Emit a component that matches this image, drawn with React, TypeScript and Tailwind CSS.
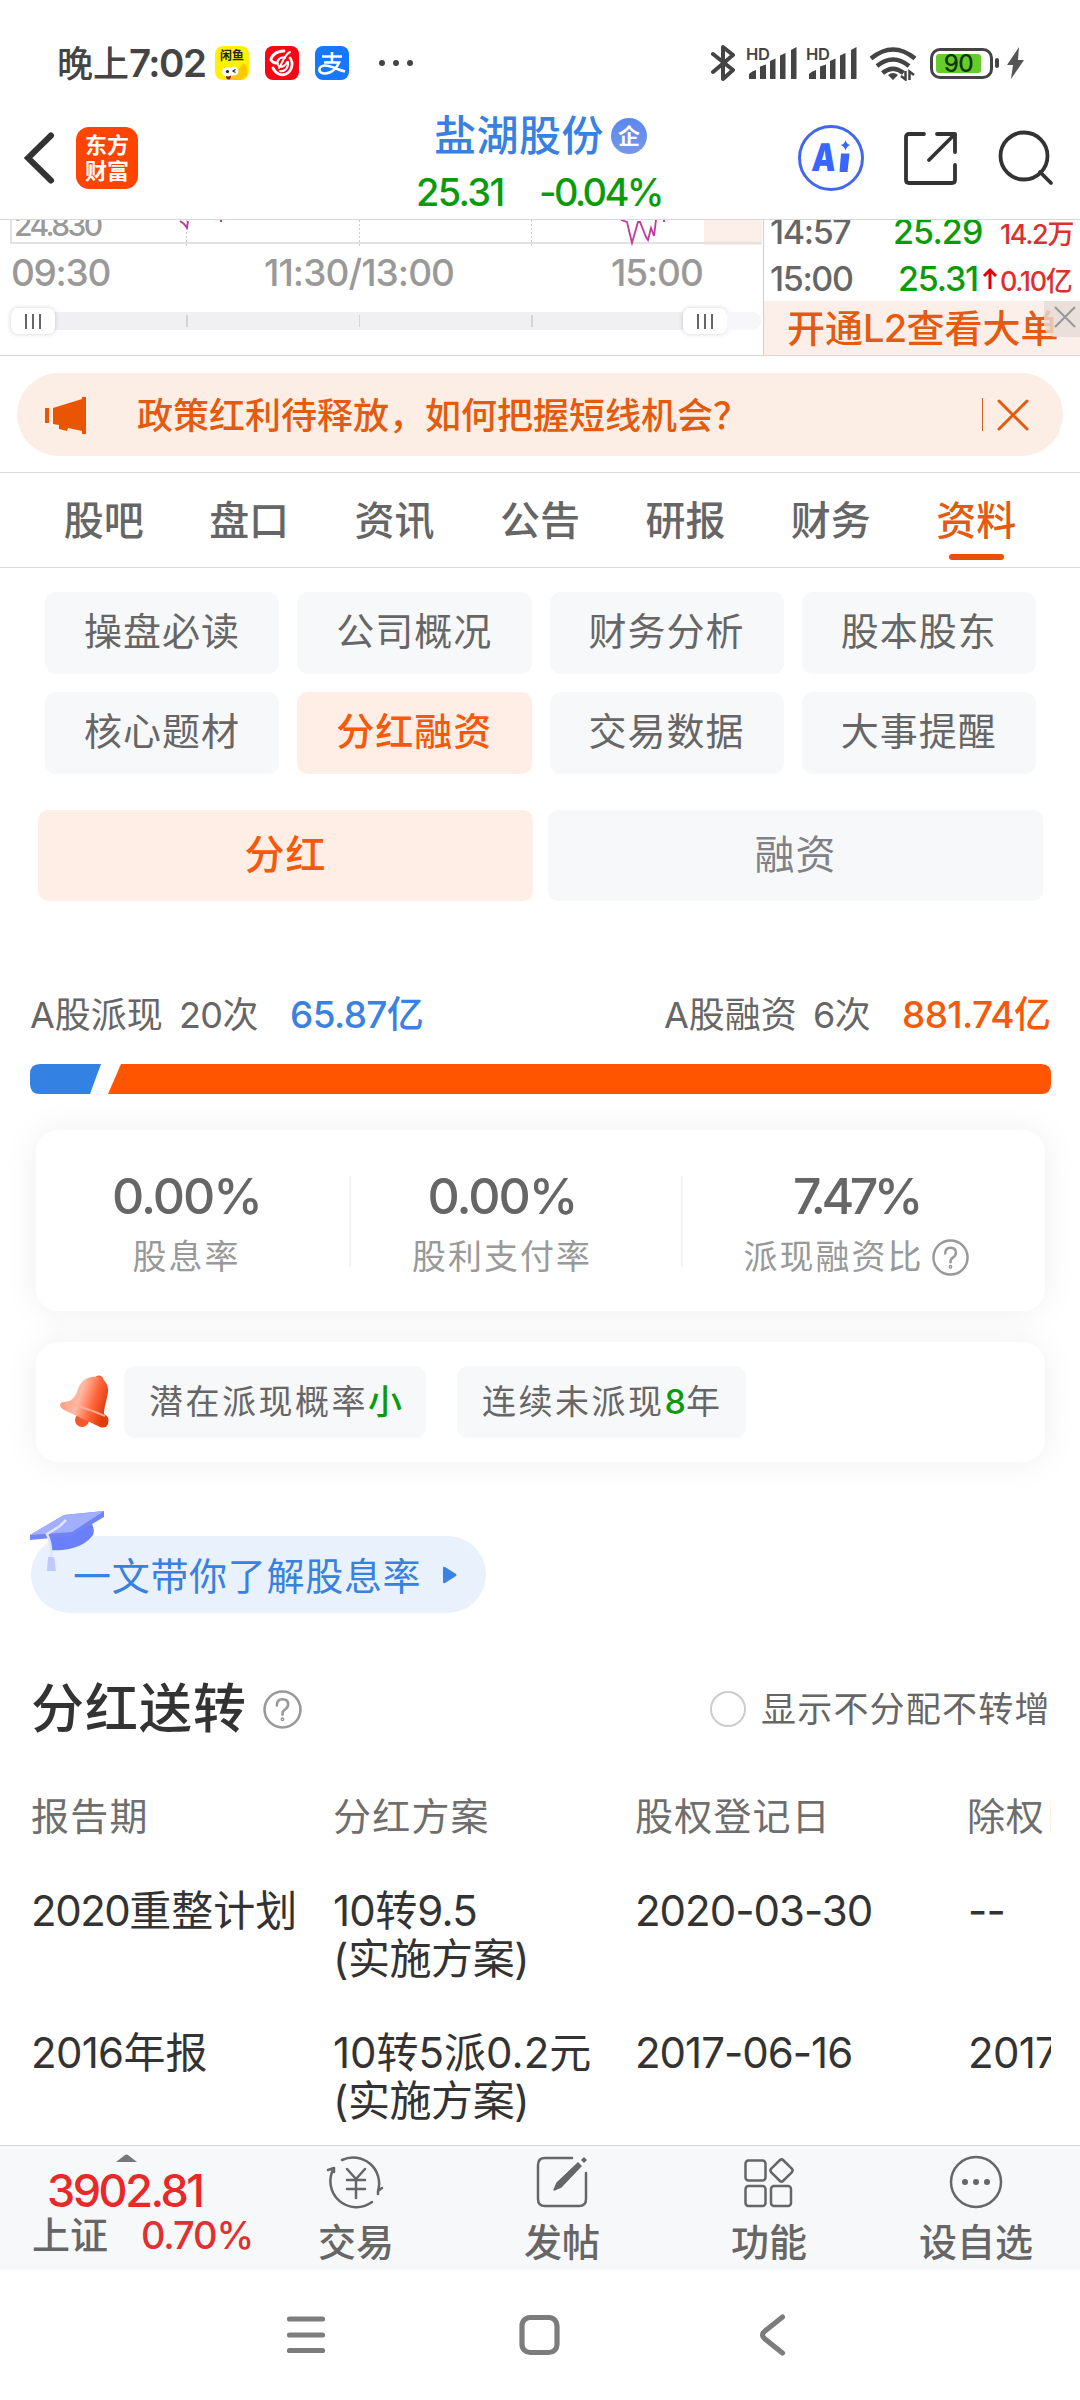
import type { ReactNode } from 'react';

const tabs = ['股吧', '盘口', '资讯', '公告', '研报', '财务', '资料'];

const subTabs = ['操盘必读', '公司概况', '财务分析', '股本股东', '核心题材', '分红融资', '交易数据', '大事提醒'];

interface DividendRow {
  period: ReactNode;
  plan: ReactNode;
  recordDate: string;
  exDate: string;
}

const Num = ({ children }: { children: ReactNode }) => <span className="tracking-[-0.017em]">{children}</span>;

const dividendRows: DividendRow[] = [
  {
    period: <><span className="tracking-[-0.035em]">2020</span>重整计划</>,
    plan: <><Num>10</Num>转<Num>9.5</Num></>,
    recordDate: '2020-03-30',
    exDate: '--',
  },
  {
    period: <><Num>2016</Num>年报</>,
    plan: <>10转5派0.2元</>,
    recordDate: '2017-06-16',
    exDate: '2017-06-19',
  },
];

const Signal = () => (
  <svg className="h-[34px] w-[50px] overflow-visible" viewBox="0 0 50 34" fill="#444">
    <text x="-1" y="13.500" fontSize="16.500" fontWeight="600" fontFamily="Inter, sans-serif" textLength="24">HD</text>
    <path d="M2 33v-5q3-3 7-4v9zM13 33V20.500l6-2V33zM23 33V15l5.500-2.500V33zM33 33V9.500L38.500 7v26zM44 33V4l5.500-3v32z" />
  </svg>
);

const StatusBar = () => (
  <div className="flex h-[110px] items-center pt-4 pl-[57px] text-[#444]">
    <div className="w-[158px] text-[36px] leading-none font-medium whitespace-nowrap">
      晚上<span className="text-[38.5px] font-semibold tracking-[-0.04em]">7:02</span>
    </div>
    <svg className="h-[34px] w-[34px]" viewBox="0 0 34 34">
      <rect width="34" height="34" rx="8" fill="#fff100" />
      <path d="M28 17c4 2 5 7 4 13l-6 4H12l10-8z" fill="#ffc800" />
      <circle cx="12" cy="26" r="5" fill="#fff" />
      <circle cx="19" cy="25" r="4.500" fill="#fff" />
      <circle cx="12.500" cy="25.500" r="1.600" fill="#222" />
      <path d="M20.500 23.500l-2.500 1.500 2.500 1.500" stroke="#222" strokeWidth="1.200" fill="none" />
      <path d="M11 30q3 1 5-.5 0 4-2.500 4T11 30z" fill="#8a1d10" />
      <text x="5" y="14" fontSize="12" fontWeight="700" fontFamily="'Noto Sans CJK SC', sans-serif" fill="#222">闲鱼</text>
    </svg>
    <svg className="ml-4 h-[34px] w-[34px]" viewBox="0 0 34 34" fill="none" stroke="#fff" strokeLinecap="round">
      <rect width="34" height="34" rx="8" fill="#fa0514" stroke="none" />
      <path d="M19 5C10 5 6 11 6 14c2 3 5 3 5 3M8 22c3 6 8 8 13 6 6-3 8-11 4-16" strokeWidth="2.800" />
      <path d="M25 6C19 9 17 18 14 22M20 12c-5-2-9 3-7 7 2 3 7 2 9-3M15 25c5 1 9-4 8-9" strokeWidth="2" />
    </svg>
    <svg className="ml-4 h-[34px] w-[34px]" viewBox="0 0 34 34" fill="none" stroke="#fff">
      <rect width="34" height="34" rx="8" fill="#1677ff" stroke="none" />
      <path d="M7 10.500h20M17 6v10M9 16.500h15c-2 5-7 11-14 11-8 0-7-8 0-8 6 0 12 4 20 6" strokeWidth="2.600" />
    </svg>
    <div className="ml-[30px] flex gap-[8px]">
      <span className="size-1.5 rounded-full bg-[#444]" />
      <span className="size-1.5 rounded-full bg-[#444]" />
      <span className="size-1.5 rounded-full bg-[#444]" />
    </div>
    <svg className="ml-[298px] h-[38px] w-[25px] shrink-0" viewBox="0 0 25 38" fill="none" stroke="#444" strokeWidth="4" strokeLinecap="round" strokeLinejoin="round">
      <path d="M2 10l20 16-10 9V3l10 8L2 28" />
    </svg>
    <div className="ml-[11px] flex gap-[10px]">
      <Signal />
      <Signal />
    </div>
    <svg className="ml-[12px] h-[36px] w-[48px]" viewBox="0 0 48 36" fill="none" stroke="#444" strokeWidth="4.500">
      <path d="M2 13.500Q24-4.500 46 13.500M8 21q16-13 32 0M13.500 28q10.500-8.500 21 0" />
      <path d="M24 35l-5-5q5-4 10 0z" fill="#444" stroke="none" />
      <path d="M36.500 26v8.500L32 31M40.500 35v-8.500l4.500 3.500" strokeWidth="2.500" />
    </svg>
    <div className="ml-[13px] flex h-[31px] w-[63px] rounded-[10px] border-[3px] border-[#444] p-[3px]">
      <div className="h-[19px] w-[45px] rounded-[3px] bg-[#66cc29] text-center text-[24px] leading-[19px] font-medium tracking-[-0.02em] text-[#143405]">90</div>
    </div>
    <div className="ml-[2px] h-[10px] w-1 rounded bg-[#444]" />
    <svg className="ml-[7px] h-[32px] w-[19px]" viewBox="0 0 19 32" fill="#555">
      <path d="M13 0L1 18h6L5 32l13-19h-6z" />
    </svg>
  </div>
);

const Header = () => (
  <div className="flex h-[110px] border-b border-[#d8d8d8] pl-[24px]">
    <svg className="mt-[21px] h-[54px] w-[32px]" viewBox="0 0 32 54" fill="none" stroke="#333" strokeWidth="6" strokeLinecap="round">
      <path d="M27 4.500L4 27l23 22.500" />
    </svg>
    <div className="mt-[17px] ml-[20px] flex h-[62px] w-[62px] flex-col items-center justify-center gap-[4px] rounded-[13px] bg-[#ff4400] text-[22px] leading-[22px] font-bold text-white">
      <span>东方</span>
      <span>财富</span>
    </div>
    <div className="w-[660px]">
      <div className="mt-[5px] flex items-center pl-[296px]">
        <span className="w-[177px] text-[42px] leading-[42px] font-medium tracking-[0.500px] whitespace-nowrap text-[#3881e0]">盐湖股份</span>
        <span className="flex size-9 items-center justify-center rounded-full bg-linear-to-b from-[#5c86ee] to-[#7599e6] text-[22px] leading-none font-bold text-white">企</span>
      </div>
      <div className="mt-[14px] flex pl-[278px] text-[38px] leading-[42px] font-medium text-[#0a9b0a]">
        <span className="w-[123px] tracking-[-0.045em]">25.31</span>
        <span className="tracking-[-0.07em]">-0.04%</span>
      </div>
    </div>
    <svg className="mt-[15px] h-[66px] w-[66px]" viewBox="0 0 66 66">
      <circle cx="33" cy="33" r="31.500" fill="none" stroke="#4168ec" strokeWidth="3" />
      <text x="17" y="46" fontSize="38" fontWeight="900" fontFamily="Inter, sans-serif" fill="#3866ff" textLength="24" lengthAdjust="spacingAndGlyphs" transform="skewX(-5)">A</text>
      <path d="M43 28.500h8.500l-2 18.500h-8zM47.500 15q1 4.500 5 5-4 1-5 5.500-1-4.500-5-5.500 4-.5 5-5z" fill="#3866ff" />
    </svg>
    <svg className="mt-[21px] ml-[39px] h-[54px] w-[54px]" viewBox="0 0 54 54" fill="none" stroke="#333" strokeWidth="3.800" strokeLinecap="round" strokeLinejoin="round">
      <path d="M21 3H6Q3 3 3 6v43q0 3 3 3h43q3 0 3-3V34M34 3h18v18M52 3L26 29" />
    </svg>
    <svg className="mt-[20px] ml-[41px] h-[56px] w-[56px]" viewBox="0 0 56 56" fill="none" stroke="#333" strokeWidth="3.800" strokeLinecap="round">
      <circle cx="26" cy="26" r="23.500" />
      <path d="M42 42l11 11" />
    </svg>
  </div>
);

const Handle = () => (
  <div className="flex h-[26px] w-[44px] items-center justify-center gap-[5px] rounded-[7px] bg-white shadow-[0_0_5px_rgba(0,0,0,0.18)]">
    <span className="h-[15px] w-[2px] bg-[#666]" />
    <span className="h-[15px] w-[2px] bg-[#666]" />
    <span className="h-[15px] w-[2px] bg-[#666]" />
  </div>
);

const ChartStrip = () => (
  <div className="flex h-[136px] border-b border-[#d8d8d8]">
    <div className="w-[763px]">
      <svg className="h-[26px] w-[763px]" viewBox="0 0 763 26" fill="none">
        <rect x="704" y="0" width="58" height="25" fill="#fceee8" />
        <path d="M11 0v23h751" stroke="#e2e2e2" strokeWidth="2" />
        <path d="M186.500 0v26M359.500 0v26M531.500 0v26" stroke="#ccc" strokeDasharray="2 2" />
        <path d="M180 1l4 3 3 4 1-7M220 1h2M621 0l6 2 5 21 6-21 2 0 6 15 2 3 3-12 3 8 2-16M663 1h2" stroke="#c0399f" strokeWidth="1.800" />
        <text x="14" y="15.500" fontSize="30" fontWeight="500" fontFamily="Inter, sans-serif" fill="#999" textLength="89">24.830</text>
      </svg>
      <div className="flex h-[53px] items-center pl-[11px] text-[37px] leading-none font-medium text-[#999]">
        <span className="w-[253px] tracking-[-0.035em]">09:30</span>
        <span className="w-[347px] tracking-[-0.025em]">11:30/13:00</span>
        <span className="tracking-[-0.03em]">15:00</span>
      </div>
      <div className="ml-[11px] mt-[13px] flex h-[18px] w-[750px] items-center rounded-r-[9px] bg-[#f0f0f3]">
        <Handle />
        <div className="ml-[131px] flex w-[497px] gap-[171px]">
          <span className="h-3 w-[1.500px] bg-[#d4d4d6]" />
          <span className="h-3 w-[1.500px] bg-[#d4d4d6]" />
          <span className="h-3 w-[1.500px] bg-[#d4d4d6]" />
        </div>
        <Handle />
        <div className="h-[18px] flex-1 rounded-r-[9px] bg-[#f7f7f9]" />
      </div>
    </div>
    <div className="flex-1 overflow-hidden border-l border-[#ccd0d4]">
      <div className="-mt-[10px] flex h-[44px] items-center pl-[6px] text-[34px] leading-none font-medium tracking-[-0.04em] text-[#666]">
        <span className="w-[123px]">14:57</span>
        <span className="w-[107px] tracking-[-0.025em] text-[#0a9b0a]">25.29</span>
        <span className="pt-1 text-[27px] whitespace-nowrap text-[#dc3030]">14.2万</span>
      </div>
      <div className="mt-[2px] flex h-[45px] items-center pl-[6px] text-[34px] leading-none font-medium tracking-[-0.04em] text-[#666]">
        <span className="w-[128px]">15:00</span>
        <span className="w-[84px] tracking-[-0.035em] text-[#0a9b0a]">25.31</span>
        <svg className="h-[24px] w-[18px]" viewBox="0 0 18 24" fill="none" stroke="#e00000" strokeWidth="3">
          <path d="M8 22V3M2 9l6-6 6 6" />
        </svg>
        <span className="pt-1.5 text-[27px] whitespace-nowrap text-[#dc3030]">0.10亿</span>
      </div>
      <div className="relative h-[54px] bg-[#fcefe9] pl-[23px] text-[38px] leading-[54px] font-medium whitespace-nowrap text-[#e45a0e]">
        开通<span className="tracking-[-0.02em]">L2</span>查看大单
        <div className="absolute top-0 right-0 flex h-[36px] w-[36px] items-center justify-center rounded-bl-[12px] bg-[#e6dbd7]/80">
          <svg className="ml-1.5 -mt-1 h-[22px] w-[22px]" viewBox="0 0 22 22" stroke="#999" strokeWidth="2.200">
            <path d="M1 1l20 20M21 1L1 21" />
          </svg>
        </div>
      </div>
    </div>
  </div>
);

const Notice = () => (
  <div className="h-[117px] border-b border-[#d8d8d8] px-[17px] pt-[17px]">
    <div className="flex h-[83px] items-center rounded-full bg-[#fceee5] pl-[28px] text-[#e45a0e]">
      <svg className="h-[38px] w-[42px]" viewBox="0 0 42 38" fill="#ea5504">
        <path d="M0 12h4v15H0zM8 12l29-9V1h4v37h-4v-3l-14-3-1 3-8-2v-4l-6-1z" />
      </svg>
      <span className="ml-[50px] w-[845px] pt-[2px] text-[36px] leading-none font-medium whitespace-nowrap">政策红利待释放，如何把握短线机会？</span>
      <span className="h-[33px] w-px bg-[#c8601f]" />
      <svg className="ml-[14px] h-[32px] w-[32px]" viewBox="0 0 32 32" stroke="#e45a0e" strokeWidth="3" strokeLinecap="round">
        <path d="M2 2l28 28M30 2L2 30" />
      </svg>
    </div>
  </div>
);

const Tabs = () => (
  <div className="grid h-[95px] grid-cols-7 border-b border-[#d8d8d8] px-[31px] pt-[26px] text-center text-[40px] leading-[44px] font-medium text-[#666]">
    {tabs.map((tab) => (
      <div key={tab} className={tab === '资料' ? 'text-[#e45a0e]' : ''}>
        {tab}
        {tab === '资料' && <div className="mx-auto mt-[11px] h-[6px] w-[55px] rounded-full bg-[#e8500a]" />}
      </div>
    ))}
  </div>
);

const SubTabs = () => (
  <div>
    <div className="grid grid-cols-4 gap-[18px] pt-[24px] pr-[44px] pl-[45px] text-center text-[38px] leading-[78px] tracking-[1px] text-[#666]">
      {subTabs.map((tab) => (
        <div
          key={tab}
          className={tab === '分红融资' ? 'h-[82px] rounded-[11px] bg-[#ffeee6] font-medium text-[#f6590a]' : 'h-[82px] rounded-[11px] bg-[#f7f8fa]'}
        >
          {tab}
        </div>
      ))}
    </div>
    <div className="mt-[36px] grid grid-cols-2 gap-[15px] pr-[37px] pl-[38px] text-center text-[40px] leading-[89px] tracking-[1px]">
      <div className="h-[91px] rounded-[10px] bg-[#ffeee6] font-medium text-[#f6590a]">分红</div>
      <div className="h-[91px] rounded-[10px] bg-[#f7f8fa] text-[#808088]">融资</div>
    </div>
  </div>
);

const Totals = () => (
  <div className="mt-[93px] px-[30px]">
    <div className="flex h-[41px] items-center text-[36px] leading-none whitespace-nowrap text-[#666]">
      <span className="w-[149px]">A股派现</span>
      <span className="w-[111px]"><Num>20</Num>次</span>
      <span className="text-[37px] font-medium text-[#3b82e0]"><Num>65.87</Num>亿</span>
      <span className="ml-auto w-[149px]">A股融资</span>
      <span className="w-[89px]"><Num>6</Num>次</span>
      <span className="w-[148px] text-[37px] font-medium text-[#f6590a]"><Num>881.74</Num>亿</span>
    </div>
    <svg className="mt-[29px] h-[30px] w-[1021px]" viewBox="0 0 1021 30">
      <path d="M10 0h61L60 30H10Q0 30 0 20V10Q0 0 10 0z" fill="#3381e3" />
      <path d="M91 0h920q10 0 10 10v10q0 10-10 10H78z" fill="#ff5500" />
    </svg>
  </div>
);

const Question = ({ className }: { className: string }) => (
  <svg className={className} viewBox="0 0 38 38" fill="none" stroke="#999" strokeWidth="2.500" strokeLinecap="round">
    <circle cx="19" cy="19" r="17.500" />
    <path d="M13.500 15q0-6 5.500-6t5.500 5q0 3-3 5t-2.500 5" />
    <circle cx="19" cy="28.500" r="0.700" />
  </svg>
);

const Stat = ({ value, label, className, help }: { value: ReactNode; label: string; className: string; help?: boolean }) => (
  <div className={className}>
    <div className="text-[50px] leading-[50px] font-medium tracking-[-0.04em] text-[#666]">{value}</div>
    <div className="mt-[16px] flex items-center justify-center text-[34px] leading-[40px] tracking-[2px] whitespace-nowrap text-[#999]">
      {label}
      {help && <Question className="ml-[8px] h-[37px] w-[37px]" />}
    </div>
  </div>
);

const Stats = () => (
  <div className="mx-[36px] mt-[36px] flex h-[181px] w-[1009px] rounded-[22px] bg-white pt-[41px] text-center shadow-[0_0_36px_rgba(0,0,0,0.065)]">
    <Stat className="w-[301px]" value="0.00%" label="股息率" />
    <div className="mt-[5px] ml-[12px] h-[91px] w-[2px] bg-[#f4f4f4]" />
    <Stat className="w-[302px]" value="0.00%" label="股利支付率" />
    <div className="mt-[5px] ml-[28px] h-[91px] w-[2px] bg-[#f4f4f4]" />
    <Stat className="w-[346px]" value={<span className="tracking-[-0.09em]">7.47%</span>} label="派现融资比" help />
  </div>
);

const Bell = () => (
  <svg className="h-[54px] w-[50px]" viewBox="0 0 50 54">
    <defs>
      <linearGradient id="bell" x1="0.100" y1="0.300" x2="0.950" y2="0.600">
        <stop offset="0" stopColor="#ff9c82" />
        <stop offset="0.350" stopColor="#ffb9a4" />
        <stop offset="0.700" stopColor="#ff6538" />
        <stop offset="1" stopColor="#e03c0c" />
      </linearGradient>
    </defs>
    <circle cx="39" cy="5" r="4.500" fill="#f0623f" />
    <circle cx="22" cy="45" r="7" fill="#f2582c" />
    <path d="M32 2c10-2 17 6 16 15-1 8-4 15-4 22 5 3 5 5 4 10q-2 5-8 3L4 35c-5-3-5-7-1-8 7 0 11-3 14-10 3-9 7-14 15-15z" fill="url(#bell)" />
    <path d="M3 28c14 1 30 8 42 13" stroke="#ffad98" strokeWidth="2" fill="none" />
  </svg>
);

const Alerts = () => (
  <div className="mx-[36px] mt-[31px] flex h-[120px] w-[1009px] items-center rounded-[22px] bg-white pl-[24px] text-[34px] leading-[71px] tracking-[2.500px] whitespace-nowrap text-[#666] shadow-[0_0_36px_rgba(0,0,0,0.065)]">
    <Bell />
    <div className="ml-[14px] h-[72px] w-[302px] rounded-[11px] bg-[#f7f8fa] pl-[25px]">
      潜在派现概率<span className="font-medium text-[#0a9b0a]">小</span>
    </div>
    <div className="ml-[31px] h-[72px] w-[289px] rounded-[11px] bg-[#f7f8fa] pl-[25px]">
      连续未派现<span className="font-medium tracking-normal text-[#0a9b0a]">8</span>年
    </div>
  </div>
);

const Guide = () => (
  <div className="relative mt-[74px] ml-[31px] flex h-[77px] w-[455px] items-center rounded-full bg-[#e9f1fc] pl-[42px]">
    <span className="w-[369px] pt-[3px] text-[38px] leading-none tracking-[0.700px] whitespace-nowrap text-[#3881e0]">一文带你了解股息率</span>
    <svg className="h-[18px] w-[16px]" viewBox="0 0 16 18" fill="#3b82e6">
      <path d="M1 2q0-2 2-1l11 7q1 1 0 2L3 17q-2 1-2-1z" />
    </svg>
    <svg className="absolute -top-[26px] -left-[2px] h-[64px] w-[78px]" viewBox="0 0 78 64">
      <path d="M21 24v16q30 2 43-15 2-5-1-11z" fill="#6a80f8" />
      <path d="M1 25L35 5l40-4v6L43 26 1 30z" fill="#7184f5" />
      <path d="M1 25L35 5l40-4-32 21z" fill="#a2affc" />
      <path d="M37 10l-6 6-13 8q5 10 4 24" stroke="#dfe4ff" strokeWidth="2.500" fill="none" />
      <path d="M19 47h6l2 14h-9z" fill="#bfc9fd" />
    </svg>
  </div>
);

const Dividends = () => (
  <div className="h-[532px] overflow-hidden pr-[29px] pl-[31px] text-[#333]">
    <div className="mt-[66px] flex h-[60px] items-center">
      <span className="w-[232px] text-[53px] leading-none font-medium tracking-[1px] whitespace-nowrap">分红送转</span>
      <Question className="h-[39px] w-[39px]" />
      <span className="ml-auto size-[36px] rounded-full border-2 border-[#ccc]" />
      <span className="ml-[15px] w-[290px] text-[35px] leading-none tracking-[1.200px] whitespace-nowrap text-[#666]">显示不分配不转增</span>
    </div>
    <div className="mt-[54px] grid w-[1020px] grid-cols-[302px_302px_332px_84px] overflow-hidden text-[38px] leading-[46px] tracking-[1.200px] whitespace-nowrap text-[#6e6e6e]">
      <span>报告期</span>
      <span>分红方案</span>
      <span>股权登记日</span>
      <span className="overflow-hidden tracking-[0.700px]">除权日</span>
    </div>
    <div className="mt-[48px] flex w-[1020px] flex-col gap-[46px]">
      {dividendRows.map((row) => (
        <div
          key={row.recordDate}
          className="grid h-[96px] grid-cols-[302px_302px_333px_83px] text-[42px] leading-[48px] whitespace-nowrap"
        >
          <span>{row.period}</span>
          <span>
            {row.plan}
            <br />
            <span className="tracking-[-0.400px]">(实施方案)</span>
          </span>
          <span className="tracking-[-0.024em]">{row.recordDate}</span>
          <span className="overflow-hidden tracking-[-0.017em]">{row.exDate}</span>
        </div>
      ))}
    </div>
  </div>
);

const Action = ({ label, className, children }: { label: string; className: string; children: ReactNode }) => (
  <div className={className}>
    <svg className="mx-auto h-[60px] w-[64px]" viewBox="0 0 64 60" fill="none" stroke="#666" strokeWidth="2.500" strokeLinecap="round" strokeLinejoin="round">
      {children}
    </svg>
    <div className="mt-[9px] text-center text-[38px] leading-[42px] font-medium whitespace-nowrap">{label}</div>
  </div>
);

const BottomBar = () => (
  <div className="flex h-[125px] border-t border-[#d4d6d8] bg-[#f7f8fa] text-[#666]">
    <div className="w-[276px]">
      <svg className="mt-[8px] ml-[116px] h-[8px] w-[21px]" viewBox="0 0 21 8" fill="#777">
        <path d="M0 8L9 1q1.500-1 3 0l9 7z" />
      </svg>
      <div className="mt-[8px] ml-[47px] text-[45px] leading-[42px] font-medium tracking-[-0.055em] text-[#e92828]">3902.81</div>
      <div className="mt-[2px] flex pl-[32px] text-[38px] leading-[42px] font-medium">
        <span className="w-[109px]">上证</span>
        <span className="tracking-[-0.03em] text-[#e03030]">0.70%</span>
      </div>
    </div>
    <Action label="交易" className="mt-[6px] w-[160px]">
      <path d="M18 8A26 26 0 0 1 54 39l4-3M54 39l0 3M48 50A26 26 0 0 1 10 16l-6 2M10 16l0 4M23 17l9 10 9-10M32 27v19M23 28h18M23 37h18" />
    </Action>
    <Action label="发帖" className="mt-[6px] ml-[46px] w-[160px]">
      <path d="M42 6H15q-7 0-7 7v34q0 7 7 7h34q7 0 7-7V21" />
      <path d="M24 38l3-7 21-20 3 3-20 21zM52 8l2-2 2 2-2 2z" fill="#666" strokeWidth="1.500" />
    </Action>
    <Action label="功能" className="mt-[6px] ml-[47px] w-[160px]">
      <rect x="8.500" y="8.500" width="20" height="20" rx="3" />
      <rect x="8.500" y="34" width="20" height="20" rx="3" />
      <rect x="34" y="34" width="20" height="20" rx="3" />
      <rect x="36" y="10" width="17" height="17" rx="2.500" transform="rotate(45 44.500 18.500)" />
    </Action>
    <Action label="设自选" className="mt-[6px] ml-[47px] w-[160px]">
      <circle cx="32" cy="30" r="25" />
      <path d="M21 30h.01M32 30h.01M43 30h.01" strokeWidth="6" />
    </Action>
  </div>
);

const SystemNav = () => (
  <div className="flex h-[129px] items-start pt-[43px] pl-[286px]">
    <svg className="h-[44px] w-[500px]" viewBox="0 0 500 44" fill="none" stroke="#7c7c7c" strokeWidth="5.200" strokeLinecap="round" strokeLinejoin="round">
      <path d="M3.500 6h33M3.500 22h33M3.500 37.500h33" />
      <rect x="236" y="4.500" width="35" height="35" rx="8" />
      <path d="M496.500 4L479 18q-5 4 0 8l17.500 14" />
    </svg>
  </div>
);

const App = () => {
  return (
    <div className="h-[2400px] w-[1080px] overflow-hidden bg-white font-['Inter','Noto_Sans_CJK_SC',sans-serif]">
      <StatusBar />
      <Header />
      <ChartStrip />
      <Notice />
      <Tabs />
      <SubTabs />
      <Totals />
      <Stats />
      <Alerts />
      <Guide />
      <Dividends />
      <BottomBar />
      <SystemNav />
    </div>
  );
};

export default App;
